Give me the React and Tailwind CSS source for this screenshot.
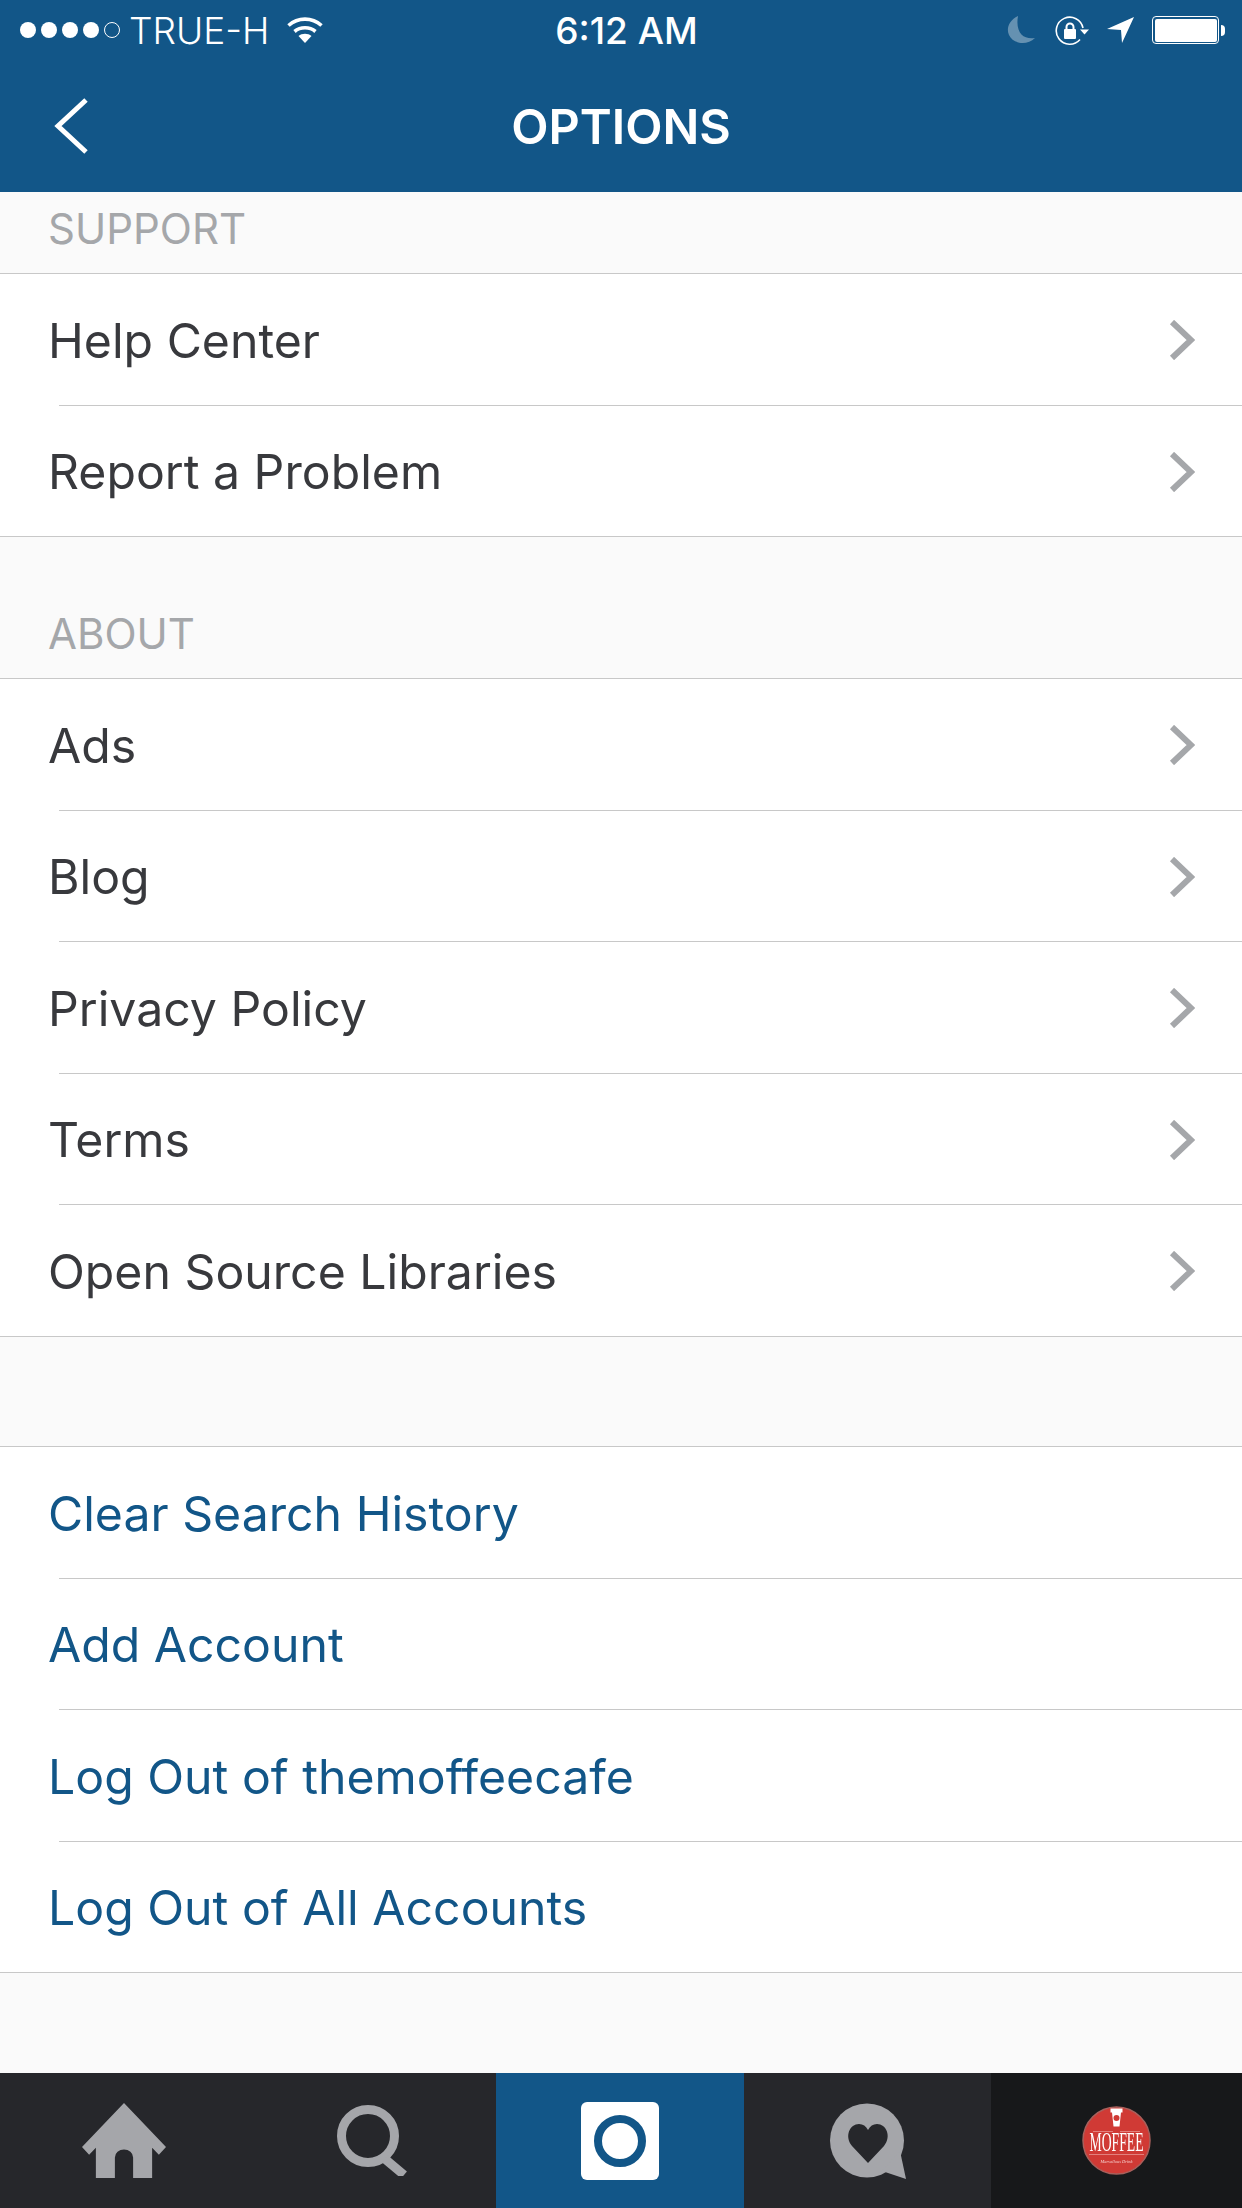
import React from 'react';

const support = ['Help Center', 'Report a Problem'];
const about = ['Ads', 'Blog', 'Privacy Policy', 'Terms', 'Open Source Libraries'];
const actions = ['Clear Search History', 'Add Account', 'Log Out of themoffeecafe', 'Log Out of All Accounts'];

const SectionLabel = ({ label, className }) => (
  <div className={`flex items-end pl-[48px] pb-[21px] text-[42px] leading-[46px] text-[#a5a7aa] ${className}`}>
    {label}
  </div>
);

const Row = ({ label, last, link }) => (
  <>
    <div className="h-[130.5px] flex items-center justify-between pl-[48px] pr-[47px] bg-white">
      <span className={`mt-[3px] text-[48.2px] ${link ? 'text-[#125688]' : 'text-[#38393d]'}`}>{label}</span>
      {!link && (
        <svg className="mt-[2px]" width="26" height="40" viewBox="0 0 26 40" fill="none" stroke="#a5a7aa" strokeWidth="6">
          <path d="M3 2 L22 20 L3 38" />
        </svg>
      )}
    </div>
    <div className={`h-px bg-white ${last ? '' : 'pl-[59px]'}`}>
      <div className="h-px bg-[#c8c8c8]" />
    </div>
  </>
);

const Group = ({ items, link }) => (
  <div>
    <div className="h-px bg-[#c8c8c8]" />
    {items.map((item, i) => (
      <Row key={item} label={item} link={link} last={i === items.length - 1} />
    ))}
  </div>
);

const StatusBar = () => (
  <div className="h-[60px] grid grid-cols-[1fr_auto_1fr] items-center pl-[20px] pr-[17px] text-white">
    <div className="flex items-center">
      <div className="flex items-center gap-[5px]">
        <span className="w-[16px] h-[16px] rounded-full bg-white" />
        <span className="w-[16px] h-[16px] rounded-full bg-white" />
        <span className="w-[16px] h-[16px] rounded-full bg-white" />
        <span className="w-[16px] h-[16px] rounded-full bg-white" />
        <span className="w-[16px] h-[16px] rounded-full border border-white" />
      </div>
      <span className="ml-[9px] text-[37px] font-light leading-none">TRUE-H</span>
      <svg className="ml-[18px]" width="36" height="28" viewBox="0 0 36 28" fill="none" stroke="white" strokeWidth="3.6">
        <path d="M1.5 9.5 C11 1 25 1 34.5 9.5" />
        <path d="M7.5 15.5 C13.5 10.5 22.5 10.5 28.5 15.5" />
        <path d="M18 27 L11.5 20 C15 17 21 17 24.5 20 Z" fill="white" stroke="none" />
      </svg>
    </div>
    <span className="ml-[8px] text-[37px] font-medium leading-none">6:12 AM</span>
    <div className="flex items-center justify-end">
      <svg width="28" height="28" viewBox="0 0 28 28" fill="#fff" opacity="0.35">
        <path d="M11 0 C2 4 -1 13 2 19 C6 28 20 30 28 22 C17 24 8 17 11 0 Z" />
      </svg>
      <svg className="ml-[20px]" width="34" height="29" viewBox="0 0 34 29" fill="none" stroke="white" strokeWidth="1.6">
        <path d="M28 12 A13.5 13.5 0 1 0 25 23.5" />
        <path d="M25 13.5 H34 L29.5 18.5 Z" fill="white" stroke="none" />
        <rect x="9" y="13" width="12" height="10" rx="1" fill="white" stroke="none" />
        <path d="M11.5 13 V11 A3.5 3.5 0 0 1 18.5 11 V13" strokeWidth="2" />
      </svg>
      <svg className="ml-[18px]" width="27" height="26" viewBox="0 0 27 26" fill="white">
        <path d="M27 0 L15 26 L14 13 L0 12 Z" />
      </svg>
      <div className="ml-[18px] flex items-center gap-[2px]">
        <div className="w-[67px] h-[28px] p-[1.5px] rounded-[4px] border border-white">
          <div className="w-full h-full rounded-[2px] bg-white" />
        </div>
        <div className="w-[4px] h-[11px] rounded-r-full bg-white" />
      </div>
    </div>
  </div>
);

const TabBar = () => (
  <div className="h-[135px] shrink-0 grid grid-cols-[248px_248px_248px_247px_1fr] bg-[#26272b]">
    <div className="flex items-center justify-center">
      <svg width="84" height="75" viewBox="0 0 212 213" preserveAspectRatio="none" fill="#a5a6aa">
        <path d="M106 0 L212 125 L194 147 L177 127 V213 H129 V155 A23 23 0 0 0 83 155 V213 H35 V127 L18 147 L0 125 Z" />
      </svg>
    </div>
    <div className="flex items-center justify-center">
      <svg width="71" height="71" viewBox="0 0 71 71" fill="none" stroke="#a5a6aa" strokeWidth="9">
        <circle cx="31" cy="31" r="26.5" />
        <path d="M48 54 L67 70" />
      </svg>
    </div>
    <div className="flex items-center justify-center bg-[#125688]">
      <div className="w-[78px] h-[78px] flex items-center justify-center rounded-[6px] bg-white">
        <div className="w-[52px] h-[52px] rounded-full border-[8px] border-[#125688]" />
      </div>
    </div>
    <div className="flex items-center justify-center">
      <svg width="76" height="76" viewBox="0 0 76 76">
        <circle cx="37" cy="37.5" r="37" fill="#a5a6aa" />
        <path d="M70 48 L76 76 L52 68 Z" fill="#a5a6aa" />
        <path d="M38 60 L22 43 C14 33 20 21 29 21 C33 21 36 23 38 27 C40 23 43 21 47 21 C56 21 62 33 54 43 Z" fill="#26272b" />
      </svg>
    </div>
    <div className="flex items-center justify-center bg-[#17181a]">
      <svg className="blur-[0.4px]" width="71" height="71" viewBox="0 0 71 71">
        <circle cx="35.5" cy="35.5" r="33.5" fill="#d03a35" stroke="#a8605c" strokeWidth="1.5" />
        <path d="M29.5 3.5 H41.5 V7.5 H40 L38.5 21.5 H32.5 L31 7.5 H29.5 Z" fill="#fff" />
        <circle cx="35.5" cy="13" r="3" fill="#d03a35" />
        <path d="M12 26.5 H32 M39 26.5 H59 M8 49.5 H63" stroke="#f0b0ae" strokeWidth="0.6" />
        <text x="8.5" y="46" fill="#fff" fontFamily="'Liberation Serif', serif" fontSize="28" textLength="54" lengthAdjust="spacingAndGlyphs">MOFFEE</text>
        <text x="19.5" y="58" fill="#f6d0ce" fontFamily="'Liberation Serif', serif" fontStyle="italic" fontSize="5" textLength="32" lengthAdjust="spacingAndGlyphs">Marvellous Drink</text>
      </svg>
    </div>
  </div>
);

export default function App() {
  return (
    <div className="w-[1242px] h-[2208px] flex flex-col overflow-hidden bg-[#fafafa] font-['Inter',sans-serif]">
      <div className="h-[192px] shrink-0 bg-[#125688]">
        <StatusBar />
        <div className="relative h-[132px] flex items-center justify-center">
          <svg className="absolute left-[54px] top-[38px]" width="34" height="56" viewBox="0 0 34 56" fill="none" stroke="white" strokeWidth="5">
            <path d="M32 2 L4 28 L32 54" />
          </svg>
          <span className="mt-[2px] text-[48.5px] font-semibold text-white">OPTIONS</span>
        </div>
      </div>
      <SectionLabel label="SUPPORT" className="h-[81px]" />
      <Group items={support} />
      <SectionLabel label="ABOUT" className="h-[141px]" />
      <Group items={about} />
      <div className="h-[109.5px]" />
      <Group items={actions} link />
      <div className="flex-1" />
      <TabBar />
    </div>
  );
}
